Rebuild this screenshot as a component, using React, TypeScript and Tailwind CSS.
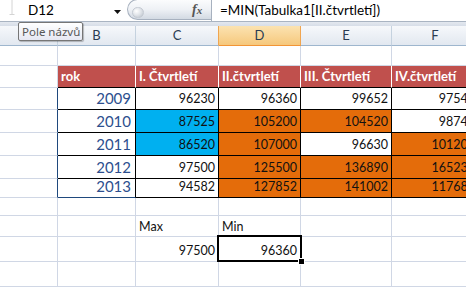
import React from "react";

const W = ["w-[58px]", "w-[78px]", "w-[83px]", "w-[82px]", "w-[91px]", "w-[87px]"];
const FONT = "font-['Lato','Liberation_Sans',sans-serif]";

type CellProps = { i: number; cls?: string; children?: React.ReactNode };
function Cell({ i, cls = "", children }: CellProps) {
  return (
    <div
      className={`${W[i]} shrink-0 h-full flex overflow-hidden whitespace-nowrap border-r border-b ${cls}`}
    >
      {children}
    </div>
  );
}

const G = "border-[#D0D7E5]";
const NUM = "items-end justify-end pr-[3px] pb-[3px] text-[12.5px] leading-[14px] text-[#111]";
const YEAR = "items-end justify-end pr-[4px] pb-[3px] text-[15px] leading-[16px] text-[#2d4f8e]";
const HEAD = "items-center justify-start pl-[3px] bg-[#C0504D] border-r-white border-b-black text-white font-bold text-[13px]";

const rows: { y: string; h: string; v: number[]; fills: string[] }[] = [
  { y: "2009", h: "h-[22px]", v: [96230, 96360, 99652, 97545], fills: ["bg-white", "bg-white", "bg-white", "bg-white"] },
  { y: "2010", h: "h-[23px]", v: [87525, 105200, 104520, 98745], fills: ["bg-[#00B0F0]", "bg-[#E46C0A]", "bg-[#E46C0A]", "bg-white"] },
  { y: "2011", h: "h-[23px]", v: [86520, 107000, 96630, 101200], fills: ["bg-[#00B0F0]", "bg-[#E46C0A]", "bg-white", "bg-[#E46C0A]"] },
  { y: "2012", h: "h-[23px]", v: [97500, 125500, 136890, 165230], fills: ["bg-white", "bg-[#E46C0A]", "bg-[#E46C0A]", "bg-[#E46C0A]"] },
  { y: "2013", h: "h-[19px]", v: [94582, 127852, 141002, 117680], fills: ["bg-white", "bg-[#E46C0A]", "bg-[#E46C0A]", "bg-[#E46C0A]"] },
];

function EmptyRow({ h }: { h: string }) {
  return (
    <div className={`flex ${h}`}>
      {[0, 1, 2, 3, 4, 5].map((i) => (
        <Cell key={i} i={i} cls={G} />
      ))}
    </div>
  );
}

export default function App() {
  return (
    <div className={`relative w-[466px] h-[287px] overflow-hidden bg-white ${FONT}`}>
      {/* formula bar */}
      <div className="flex h-[21px] bg-white">
        <div className="relative w-[127px] shrink-0 flex items-center pl-[28px] text-[13.5px] text-black">
          <svg className="absolute left-[9px] top-0" width="6" height="16" viewBox="0 0 6 16">
            <path d="M3 0V14M0.5 14.5H5.5" stroke="#d4d4d4" strokeWidth="1" fill="none" />
          </svg>
          D12
          <svg className="absolute left-[114px] top-[10px]" width="7" height="4" viewBox="0 0 7 4">
            <path d="M0 0H7L3.5 4Z" fill="#111" />
          </svg>
        </div>
        <div className="relative w-[84px] shrink-0 h-[21px] -mt-[1px] rounded-l-full border border-r-0 border-[#a7b1bf] bg-linear-to-b from-[#fbfcfd] via-[#eef1f5] to-[#d3dae3]">
          <div className="absolute left-[4px] top-[7px] w-[12px] h-[11px] rounded-full bg-radial-[at_35%_35%] from-[#ffffff] via-[#dfe3e8] to-[#b9c0c9] border border-[#c4cad2]" />
          <span className="absolute left-[64px] top-[3px] font-['Liberation_Serif',serif] italic font-bold text-[#555] text-[14px] leading-[14px]">
            f<span className="text-[11px]">x</span>
          </span>
        </div>
        <div className="flex-1 flex items-center pl-[8px] border-l border-[#a7b1bf] text-[13.5px] text-black whitespace-nowrap">
          =MIN(Tabulka1[II.čtvrtletí])
        </div>
      </div>
      <div className="h-[5px] border-t border-[#a9b4c2] bg-linear-to-b from-[#e3e8ef] to-[#d7dee8]" />

      {/* column headers */}
      <div className="flex h-[20px] text-[13px] text-[#2a3b52]">
        {["A", "B", "C", "D", "E", "F"].map((l, i) => (
          <div
            key={l}
            className={`${W[i]} shrink-0 h-full flex items-center justify-center border-r border-b ${
              i === 3
                ? "bg-linear-to-b from-[#fbe3b1] to-[#f6c87c] border-r-[#f0a550] border-b-[#f29536]"
                : i === 2
                ? "bg-linear-to-b from-[#f6f8fb] to-[#e2e8f0] border-r-[#f0a550] border-b-[#9eb6ce]"
                : "bg-linear-to-b from-[#f6f8fb] to-[#e2e8f0] border-r-[#c5d2df] border-b-[#9eb6ce]"
            }`}
          >
            {l}
          </div>
        ))}
      </div>

      <EmptyRow h="h-[20px]" />

      {/* table header */}
      <div className="flex h-[22px]">
        <Cell i={0} cls={G} />
        <Cell i={1} cls={HEAD}>rok</Cell>
        <Cell i={2} cls={HEAD}>I. Čtvrtletí</Cell>
        <Cell i={3} cls={HEAD}>II.čtvrtletí</Cell>
        <Cell i={4} cls={HEAD}>III. Čtvrtletí</Cell>
        <Cell i={5} cls={HEAD}>IV.čtvrtletí</Cell>
      </div>

      {rows.map((r, ri) => (
        <div key={r.y} className={`flex ${r.h}`}>
          <Cell i={0} cls="border-b-[#D0D7E5] border-r-[#1F497D]" />
          <Cell i={1} cls={`${YEAR} bg-white border-r-black ${ri === 4 ? "border-b-[#1F497D]" : "border-b-black"}`}>
            {r.y}
          </Cell>
          {r.v.map((n, k) => (
            <Cell key={k} i={k + 2} cls={`${NUM} ${r.fills[k]} border-black`}>
              {n}
            </Cell>
          ))}
        </div>
      ))}

      <EmptyRow h="h-[18px]" />

      <div className="flex h-[21px]">
        <Cell i={0} cls={G} />
        <Cell i={1} cls={G} />
        <Cell i={2} cls={`${G} items-end justify-start pl-[3px] pb-[2px] text-[12.5px] leading-[14px] text-[#111]`}>Max</Cell>
        <Cell i={3} cls={`${G} items-end justify-start pl-[3px] pb-[2px] text-[12.5px] leading-[14px] text-[#111]`}>Min</Cell>
        <Cell i={4} cls={G} />
        <Cell i={5} cls={G} />
      </div>

      <div className="flex h-[25px]">
        <Cell i={0} cls={G} />
        <Cell i={1} cls={G} />
        <Cell i={2} cls={`${G} ${NUM}`}>97500</Cell>
        <Cell i={3} cls={`${G} ${NUM}`}>96360</Cell>
        <Cell i={4} cls={G} />
        <Cell i={5} cls={G} />
      </div>

      <EmptyRow h="h-[25px]" />
      <EmptyRow h="h-[25px]" />

      {/* selection */}
      <div className="absolute left-[217px] top-[235px] w-[85px] h-[27px] border-2 border-black pointer-events-none" />
      <div className="absolute left-[298px] top-[258px] w-[7px] h-[7px] bg-black border border-white" />

      {/* tooltip */}
      <div className="absolute left-[18px] top-[22px] w-[65px] h-[19px] rounded-[2px] border border-[#767676] bg-linear-to-b from-white to-[#e6e8f2] shadow-[1px_1px_1px_rgba(0,0,0,0.25)] flex items-center pl-[3px] font-['Noto_Sans',sans-serif] text-[11.5px] leading-[14px] text-[#575757] whitespace-nowrap">
        Pole názvů
      </div>
    </div>
  );
}
